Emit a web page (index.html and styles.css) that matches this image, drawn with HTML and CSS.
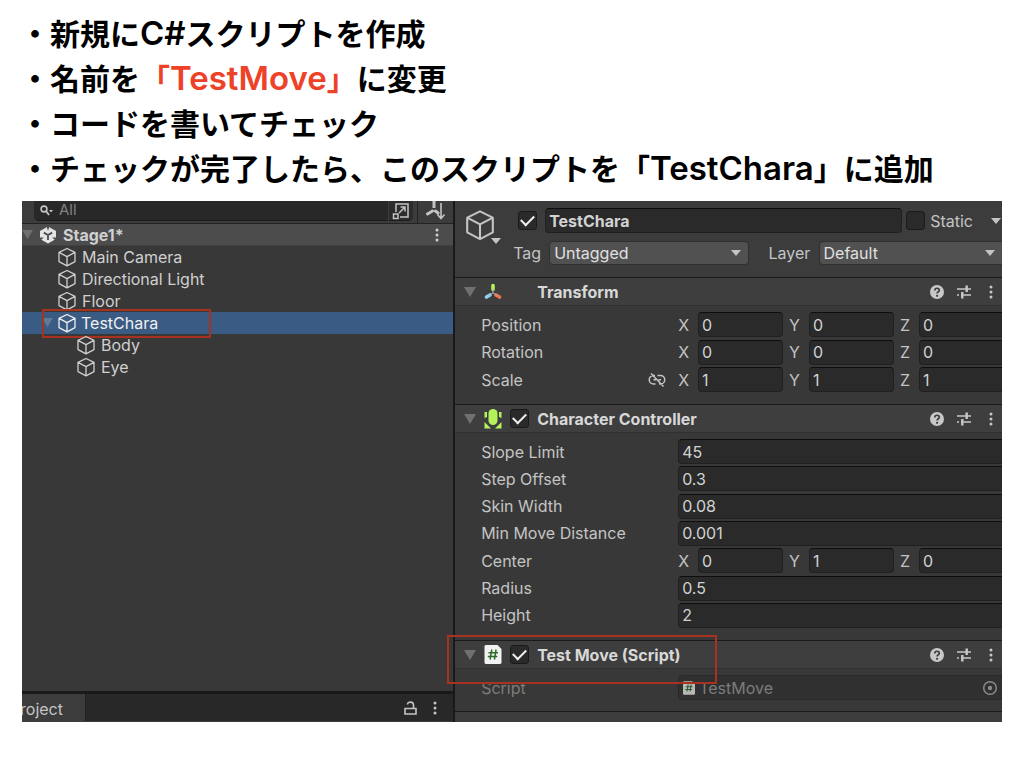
FILE: index.html
```html
<!DOCTYPE html>
<html lang="ja">
<head>
<meta charset="utf-8">
<title>TestMove</title>
<link rel="stylesheet" href="styles.css">
</head>
<body>
<svg class="defs" aria-hidden="true">
  <symbol id="cube" viewBox="0 0 20 20"><path d="M10 1.5 18 5.4V14.6L10 18.8 2 14.6V5.4ZM2 5.4 10 9.6 18 5.4M10 9.6V18.8" fill="none" stroke="currentColor" stroke-width="1.3" stroke-linejoin="round"/></symbol>
  <symbol id="down" viewBox="0 0 12 12"><path d="M0 1H12L6 11Z" fill="currentColor"/></symbol>
  <symbol id="caret" viewBox="0 0 10 6"><path d="M0 0H10L5 6Z" fill="currentColor"/></symbol>
  <symbol id="dots" viewBox="0 0 4 14"><g fill="currentColor"><circle cx="2" cy="2" r="1.5"/><circle cx="2" cy="7" r="1.5"/><circle cx="2" cy="12" r="1.5"/></g></symbol>
  <symbol id="help" viewBox="0 0 14 14"><circle cx="7" cy="7" r="7" fill="#c8c8c8"/><path d="M4.8 5.4C4.8 2.6 9.3 2.6 9.3 5.2 9.3 6.8 7.1 6.8 7.1 8.5" fill="none" stroke="#3e3e3e" stroke-width="1.7"/><circle cx="7.1" cy="10.8" r="1.1" fill="#3e3e3e"/></symbol>
  <symbol id="preset" viewBox="0 0 14 14"><path d="M0 4H9M9 4H14M0 10H2M4 10H14" fill="none" stroke="currentColor" stroke-width="1.5"/><path d="M9.7 .5V7M5.300 7V13.500" stroke="currentColor" stroke-width="2.400"/></symbol>
  <symbol id="script" viewBox="0 0 17 19"><path d="M1 0H13L17 4V18L16 19H1L0 18V1Z" fill="#f2f2f2"/><path d="M7.300 4.500 5.600 14.500M11.600 4.500 9.900 14.500M4 7.700H13.500M3.300 11.500H12.800" stroke="#2f6b2b" stroke-width="1.500" fill="none"/></symbol>
</svg>

<header class="steps">
  <p>・新規に<span class="latin">C#</span>スクリプトを作成</p>
  <p>・名前を<em>「<span class="latin">TestMove</span>」</em>に変更</p>
  <p>・コードを書いてチェック</p>
  <p>・チェックが完了したら、このスクリプトを「<span class="latin">TestChara</span>」に追加</p>
</header>

<main class="editor">
  <section class="hierarchy">
    <div class="toolbar">
      <label class="search">
        <svg width="14" height="12" viewBox="0 0 14 12"><circle cx="4" cy="4" r="2.900" fill="none" stroke="currentColor" stroke-width="1.600"/><path d="M6 6 9 10" stroke="currentColor" stroke-width="1.800"/><path d="M9 5H13L11 7.500Z" fill="currentColor"/></svg>
        <input type="text" placeholder="All" aria-label="Search">
      </label>
      <button class="pick" aria-label="Search window"><svg width="18" height="18" viewBox="0 0 18 18" fill="none" stroke="currentColor" stroke-width="1.500"><path d="M4 10V2H16V15H8"/><path d="M1.500 12H6V16.500H1.500ZM7 11 12.500 5.500M8.500 5H13V9.500"/></svg></button>
      <button class="sort" aria-label="Sort"><svg width="20" height="19" viewBox="0 0 20 19" stroke="currentColor" fill="none"><path d="M8 0V7" stroke-width="3"/><path d="M6.500 10 1.500 13M9.500 10 12 12" stroke-width="3" stroke-linecap="round"/><path d="M15 2V17M11.500 13.500 15 17.500 18.500 13.500" stroke-width="1.600"/></svg></button>
    </div>
    <ul class="tree">
      <li class="scene"><button class="fold" aria-label="Fold"><svg width="11" height="11"><use href="#down"/></svg></button><svg width="18" height="18" viewBox="0 0 18 18"><path d="M9 .5 17 5V13L9 17.500 1 13V5Z" fill="#e4e4e4"/><path d="M9 9V14M9 9 4.800 6.600M9 9 13.200 6.600" stroke="#4c4c4c" stroke-width="1.800"/><path d="M7.500 0 9 5 10.500 0ZM0 11.500 4.800 11.500 1.500 14.500ZM18 11.500 13.200 11.500 16.500 14.500Z" fill="#4c4c4c"/></svg><b>Stage1*</b><button class="more" aria-label="Menu"><svg width="4" height="14"><use href="#dots"/></svg></button></li>
      <li class="child"><svg width="20" height="20"><use href="#cube"/></svg>Main Camera</li>
      <li class="child"><svg width="20" height="20"><use href="#cube"/></svg>Directional Light</li>
      <li class="child"><svg width="20" height="20"><use href="#cube"/></svg>Floor</li>
      <li class="child selected"><button class="fold" aria-label="Fold"><svg width="11" height="11"><use href="#down"/></svg></button><svg width="20" height="20"><use href="#cube"/></svg>TestChara<i class="mark"></i></li>
      <li class="grandchild"><svg width="20" height="20"><use href="#cube"/></svg>Body</li>
      <li class="grandchild"><svg width="20" height="20"><use href="#cube"/></svg>Eye</li>
    </ul>
    <div class="project">
      <button class="tab"><span>Project</span></button>
      <button class="lock" aria-label="Lock"><svg width="13" height="14" viewBox="0 0 13 14" fill="none" stroke="currentColor" stroke-width="1.600"><path d="M1 7.500H12V13H1ZM3.500 3.500C3.500 .2 9.500 .2 9.500 4V7"/></svg></button>
      <button aria-label="Menu"><svg width="4" height="14"><use href="#dots"/></svg></button>
    </div>
  </section>

  <section class="inspector">
    <div class="object">
      <div class="avatar"><svg width="32" height="32"><use href="#cube"/></svg><svg class="avatar-caret" width="10" height="6"><use href="#caret"/></svg></div>
      <div class="object-rows">
        <div class="name-row">
          <input type="checkbox" checked aria-label="Active">
          <input class="field name" type="text" value="TestChara" aria-label="Name">
          <input type="checkbox" id="static"><label for="static">Static</label>
          <button class="static-menu" aria-label="Static options"><svg width="10" height="6"><use href="#caret"/></svg></button>
        </div>
        <div class="tag-row">
          <label for="tag">Tag</label>
          <span class="drop"><select id="tag"><option>Untagged</option></select><svg width="10" height="6"><use href="#caret"/></svg></span>
          <label class="layer" for="layer">Layer</label>
          <span class="drop last"><select id="layer"><option>Default</option></select><svg width="10" height="6"><use href="#caret"/></svg></span>
        </div>
      </div>
    </div>

    <div class="bar">
      <button class="fold" aria-label="Fold"><svg width="12" height="12"><use href="#down"/></svg></button>
      <svg class="kind" width="18" height="18" viewBox="0 0 18 18" fill="none" stroke-width="3.600" stroke-linecap="round"><path d="M9 2.500V6.500" stroke="#b5f25c"/><path d="M6 12 2.500 14" stroke="#8fd0f5"/><path d="M12 12 15.500 14" stroke="#f0754a"/><path d="M9 6V10L5 12.500M9 10 13 12.500" stroke="#aaa" stroke-width="1"/></svg>
      <h2 class="nocheck">Transform</h2>
      <div class="tools"><button aria-label="Help"><svg width="14" height="14"><use href="#help"/></svg></button><button aria-label="Presets"><svg width="14" height="14"><use href="#preset"/></svg></button><button aria-label="Menu"><svg width="4" height="14"><use href="#dots"/></svg></button></div>
    </div>
    <div class="props transform">
      <div class="row"><span class="label">Position</span><div class="axes"><label>X<input class="field" value="0"></label><label>Y<input class="field" value="0"></label><label>Z<input class="field" value="0"></label></div></div>
      <div class="row"><span class="label">Rotation</span><div class="axes"><label>X<input class="field" value="0"></label><label>Y<input class="field" value="0"></label><label>Z<input class="field" value="0"></label></div></div>
      <div class="row"><span class="label">Scale<svg width="18" height="14" viewBox="0 0 18 14" fill="none" stroke="currentColor" stroke-width="1.500"><path d="M7 2.500H5.500A4 4 0 0 0 5.500 11H7.500M9.500 2.500H12.500A4 4 0 0 1 12.500 11H11M5.500 6.800H8M10.500 6.800H13M3 .5 15.500 13.500"/></svg></span><div class="axes"><label>X<input class="field" value="1"></label><label>Y<input class="field" value="1"></label><label>Z<input class="field" value="1"></label></div></div>
    </div>

    <div class="bar">
      <button class="fold" aria-label="Fold"><svg width="12" height="12"><use href="#down"/></svg></button>
      <svg class="kind" width="18" height="20" viewBox="0 0 18 20" fill="#b5f25c"><rect x="4.500" y="0" width="9" height="16" rx="4.500"/><path d="M.5 3H3V8L.5 9ZM17.500 3H15V8L17.500 9ZM.5 13 7 19.500H.5ZM17.500 13 11 19.500H17.500Z"/></svg>
      <input type="checkbox" checked aria-label="Character Controller enabled">
      <h2>Character Controller</h2>
      <div class="tools"><button aria-label="Help"><svg width="14" height="14"><use href="#help"/></svg></button><button aria-label="Presets"><svg width="14" height="14"><use href="#preset"/></svg></button><button aria-label="Menu"><svg width="4" height="14"><use href="#dots"/></svg></button></div>
    </div>
    <div class="props controller">
      <div class="row"><label class="label" for="slope">Slope Limit</label><input class="field wide" id="slope" value="45"></div>
      <div class="row"><label class="label" for="step">Step Offset</label><input class="field wide" id="step" value="0.3"></div>
      <div class="row"><label class="label" for="skin">Skin Width</label><input class="field wide" id="skin" value="0.08"></div>
      <div class="row"><label class="label" for="minmove">Min Move Distance</label><input class="field wide" id="minmove" value="0.001"></div>
      <div class="row"><span class="label">Center</span><div class="axes"><label>X<input class="field" value="0"></label><label>Y<input class="field" value="1"></label><label>Z<input class="field" value="0"></label></div></div>
      <div class="row"><label class="label" for="radius">Radius</label><input class="field wide" id="radius" value="0.5"></div>
      <div class="row"><label class="label" for="height">Height</label><input class="field wide" id="height" value="2"></div>
    </div>

    <div class="bar">
      <button class="fold" aria-label="Fold"><svg width="12" height="12"><use href="#down"/></svg></button>
      <svg class="kind" width="18" height="19"><use href="#script"/></svg>
      <input type="checkbox" checked aria-label="Test Move enabled">
      <h2>Test Move (Script)</h2>
      <div class="tools"><button aria-label="Help"><svg width="14" height="14"><use href="#help"/></svg></button><button aria-label="Presets"><svg width="14" height="14"><use href="#preset"/></svg></button><button aria-label="Menu"><svg width="4" height="14"><use href="#dots"/></svg></button></div>
      <i class="mark"></i>
    </div>
    <div class="props disabled">
      <div class="row"><label class="label" for="script-ref">Script</label><div class="field wide ref"><svg width="12" height="14"><use href="#script"/></svg><input id="script-ref" value="TestMove" readonly><svg width="16" height="16" viewBox="0 0 16 16"><circle cx="8" cy="8" r="6.300" fill="none" stroke="#b0b0b0" stroke-width="1.500"/><circle cx="8" cy="8" r="2.200" fill="#b0b0b0"/></svg></div></div>
    </div>
    <div class="end"></div>
  </section>
</main>
</body>
</html>
```
FILE: styles.css
```css
* { box-sizing: border-box; }
body { margin: 0; background: #fff; color: #c4c4c4; font: 16px/22px Inter, "Noto Sans", sans-serif; }
.defs { position: absolute; width: 0; height: 0; }
svg { flex: none; display: block; }
button { display: flex; align-items: center; justify-content: center; margin: 0; padding: 0; border: 0; background: none; color: inherit; font: inherit; }
input, select { min-width: 0; margin: 0; color: inherit; font: inherit; }
h2, p, ul { margin: 0; padding: 0; }

.steps { padding: 10px 20px 11px; color: #000; font: 700 30px/45px "Noto Sans CJK JP", sans-serif; }
.steps p { height: 45px; white-space: nowrap; }
.steps em { color: #ee4228; font-style: normal; }
.latin { font-family: Inter, sans-serif; font-weight: 600; font-size: 33px; }

.editor { display: flex; margin: 0 22px 45px; overflow: hidden; background: #383838; }

.hierarchy { flex: 432 1 0; min-width: 0; display: flex; flex-direction: column; }
.toolbar { display: flex; height: 23px; padding-left: 12px; background: #3c3c3c; border-bottom: 1px solid #232323; }
.search { flex: 1; display: flex; align-items: center; gap: 5px; min-width: 0; height: 20px; padding: 0 6px; background: #282828; border-bottom: 1px solid #1c1c1c; border-radius: 0 0 0 5px; }
.search input { flex: 1; height: 20px; padding: 0 0 2px; border: 0; background: none; font-size: 15px; }
.search input::placeholder { color: #808080; opacity: 1; }
.pick { width: 24px; height: 20px; margin-left: 1px; background: #2c2c2c; border-bottom: 1px solid #1c1c1c; border-radius: 0 0 5px 0; }
.sort { width: 36px; margin-left: 4px; border-left: 1px solid #232323; align-items: flex-start; }
.tree { flex: 1; list-style: none; }
.tree li { position: relative; display: flex; align-items: center; gap: 5px; height: 22px; color: #d0d0d0; line-height: 20px; padding-bottom: 1px; }
.tree .scene { gap: 6px; background: #4c4c4c; border-bottom: 1px solid #404040; padding-bottom: 0; }
.scene b { flex: 1; font-weight: 700; }
.fold { color: #707070; }
.more { width: 32px; }
.tree .child { padding-left: 35px; }
.tree .grandchild { padding-left: 54px; }
.tree .selected { padding-left: 20px; gap: 4px; background: #3a5b84; color: #f0f0f0; }
.selected .fold { color: #5f7a94; }
.mark { position: absolute; border: 2px solid #a83220; }
.tree .mark { left: 20px; top: -3px; width: 169px; height: 29px; }
.project { display: flex; align-items: center; gap: 16px; height: 31px; padding-right: 16px; border-top: 3px solid #191919; border-bottom: 1px solid #3c3c3c; background: #282828; }
.tab { align-self: stretch; width: 64px; justify-content: flex-end; padding: 2px 22px 0 0; overflow: hidden; background: #3c3c3c; border-right: 1px solid #202020; }
.lock { margin-left: auto; }

.inspector { flex: 548 1 0; min-width: 0; border-left: 2px solid #191919; }
.object { display: flex; height: 76px; background: #3c3c3c; }
.avatar { position: relative; width: 63px; padding: 8px 0 0 9px; }
.avatar-caret { position: absolute; left: 36px; top: 37px; }
.object-rows { flex: 1; min-width: 0; padding-top: 7px; }
.name-row, .tag-row { display: flex; align-items: center; }
.tag-row { height: 24px; margin-top: 8px; }
.name-row { height: 25px; }
.name { flex: 1; margin: 0 4px 0 8px; height: 25px; font-weight: 700; }
.name-row label { margin-left: 5px; }
.static-menu { margin: 0 1px 0 18px; }
.tag-row label { width: 31px; margin-left: -5px; }
.tag-row .layer { width: 50px; margin-left: 20px; }
.drop { position: relative; flex: 200 1 0; min-width: 0; margin-left: 5px; }
.drop.last { flex-basis: 0; flex-grow: 188; margin: 0 -4px 0 0; }
.drop select { display: block; width: 100%; height: 24px; padding: 0 4px; appearance: none; background: #515151; border: 1px solid #303030; border-radius: 4px; color: #e0e0e0; }
.drop svg { position: absolute; right: 8px; top: 9px; }
.drop.last svg { right: 11px; }

input[type="checkbox"] { flex: none; appearance: none; display: grid; place-items: center; width: 19px; height: 19px; background: #2a2a2a; border: 1px solid #1a1a1a; border-radius: 3px; }
input[type="checkbox"]:checked::after { content: ""; width: 11px; height: 6px; margin-top: -4px; border: solid #eee; border-width: 0 0 2px 2px; transform: rotate(-45deg); }
.field { height: 25px; padding: 0 3px; background: #2a2a2a; border: 1px solid #202020; border-top-color: #0e0e0e; border-radius: 4px; color: #d2d2d2; }

.bar { position: relative; display: flex; align-items: center; height: 29px; padding-left: 9px; background: #3e3e3e; border-top: 1px solid #1a1a1a; border-bottom: 1px solid #303030; }
.kind { margin: 0 8px; }
.bar h2 { flex: 1; margin-left: 8px; color: #d8d8d8; font-size: 16px; font-weight: 700; line-height: 22px; white-space: nowrap; }
.bar .nocheck { margin-left: 27px; }
.tools { display: flex; gap: 13px; padding-right: 9px; color: #c8c8c8; }
.tools button:last-child { margin-left: 5px; }
.bar .mark { left: -8px; top: -6px; width: 270px; height: 49px; z-index: 1; }

.props { display: flex; flex-direction: column; justify-content: space-between; padding: 6px 0 11px 26px; }
.transform { min-height: 98px; padding-bottom: 12px; }
.controller { min-height: 207px; padding-bottom: 12px; }
.row { display: flex; align-items: center; height: 25px; margin-right: -3px; }
.label { flex: 0 0 197px; display: flex; align-items: center; justify-content: space-between; padding-right: 12px; }
.axes { flex: 1; display: flex; gap: 6px; min-width: 0; }
.axes label { flex: 1; display: flex; align-items: center; justify-content: space-between; min-width: 0; }
.axes .field { flex: 0 1 85px; flex-grow: 1; margin-left: 9px; }
.wide { flex: 1; }
.disabled { color: #7c7c7c; }
.ref { display: flex; align-items: center; gap: 4px; padding: 0 6px 0 4px; background: #303030; border-color: #292929; color: #7c7c7c; }
.ref svg { opacity: .7; }
.ref input { flex: 1; padding: 0; border: 0; background: none; }
.end { height: 11px; background: #3c3c3c; border-top: 1px solid #1a1a1a; }
```
